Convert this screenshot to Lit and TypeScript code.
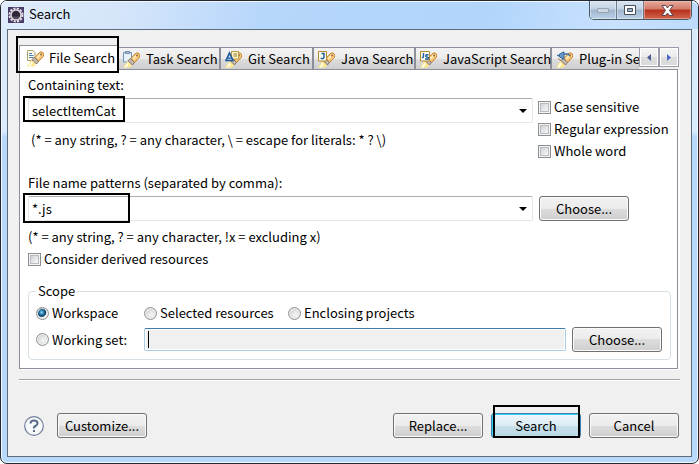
import { LitElement, html, css, svg } from 'lit';
import { customElement, property, state } from 'lit/decorators.js';
import { classMap } from 'lit/directives/class-map.js';

const base = css`
  * { box-sizing: border-box; }
  button, input {
    font: inherit;
    color: inherit;
    margin: 0;
  }
`;

const overlays: Record<string, unknown> = {
  file: svg`<path d="M.5.5h5.500l2 2v8H.500z" fill="#fffdf0" stroke="#a9a06c"/><path d="M2 3.500h3M2 5.500h4.500M2 7.500h4.500" stroke="#4f7fb8"/>`,
  task: svg`<path d="M.5 1.500h8v9.500H.500z" fill="#e9f1fb" stroke="#6f93bd"/><path d="M2.500.5h4v2h-4z" fill="#b5c6dc" stroke="#7189a8"/>`,
  git: svg`<path d="M6.500.5h7v7.500h-7z" fill="#fff5c4" stroke="#b79a45"/><path d="M8.500 3h3.500M8.500 5h3.500" stroke="#8b793b"/><path d="M4.500 2L8 9.500H1z" fill="#d6e8f7" stroke="#1f5c99" stroke-width="1.700"/><path d="M2.500 7.200h4" stroke="#1f5c99" stroke-width="1.300"/>`,
  java: svg`<path d="M.5.5h8v9.500H.500z" fill="#fffef5" stroke="#b58a2f"/><path d="M3.500 2.500h2.500v3.500q0 1.700-1.500 1.700T3 6.800" fill="none" stroke="#1f5c99" stroke-width="1.500"/>`,
  js: svg`<path d="M.5.5h9v9.500H.500z" fill="#fffef5" stroke="#b58a2f"/><path d="M3.500 2v3.500q0 1.200-1.700 1M8.500 4q-2.500-.8-2.700.6t1.600 1.500T8 8.300L5 8" fill="none" stroke="#1f5c99" stroke-width="1.400"/>`,
  plugin: svg`<path d="M1 4.500h3M8 3h4l1.500 1.500" fill="none" stroke="#44709f" stroke-width="1.500"/><path d="M3.500 3L8 .8v7.400L3.500 6z" fill="#6c99c9" stroke="#3b6798"/><path d="M2 7.500l3 2" stroke="#a9794a"/>`,
};

@customElement('search-icon')
class SearchIcon extends LitElement {
  static styles = css`:host { display: block; flex: none; width: 17px; height: 17px; } svg { display: block; }`;
  @property() kind = 'file';
  private torch() {
    return svg`<path d="M4.500 10L9 14 7 16.500H0z" fill="#ffe68a" />
      <path d="M4.500 11.500L6 13l-2.500 3.500H1.500z" fill="#fffde8" />
      <path d="M8 7.500L12 3q2-2 3.800-.5t.4 4L11.500 11.500z" fill="#fbcb7c" stroke="#c47f2b" />
      <path d="M10 8L14 3.800" stroke="#ffedc6" stroke-width="1.600" />
      <circle cx="14" cy="4.500" r="1" fill="#8d6a4a" />
      <path d="M5 9.500L7.500 7.500l4 3.800L9.500 14z" fill="#c3b9ad" stroke="#8a7868" />`;
  }
  render() {
    const front = this.kind === 'file' || this.kind === 'task';
    return html`<svg width="17" height="17" viewBox="0 0 17 17" aria-hidden="true">
      ${front ? overlays[this.kind] : ''}${this.torch()}${front ? '' : overlays[this.kind]}
    </svg>`;
  }
}

@customElement('push-button')
class PushButton extends LitElement {
  static styles = [base, css`
    :host { display: block; flex: none; width: 90px; }
    button {
      display: block;
      width: 100%;
      height: 25px;
      padding: 0;
      line-height: 20px;
      border: 1px solid #707070;
      border-radius: 3px;
      background: linear-gradient(#f2f2f2, #ebebeb 50%, #dddddd 50%, #cfcfcf);
      box-shadow: inset 0 0 0 1px #fafafa;
    }
    .primary {
      border-color: #3c7fb1;
      background: linear-gradient(#eef6fa, #dcecf3 50%, #c8e0ea 50%, #b8d9e6);
      box-shadow: inset 0 0 0 1px #39d0f5;
    }
  `];
  @property() label = '';
  @property({ type: Boolean }) primary = false;
  render() {
    return html`<button type="button" class=${classMap({ primary: this.primary })}>${this.label}</button>`;
  }
}

@customElement('combo-box')
class ComboBox extends LitElement {
  static styles = [base, css`
    :host { display: block; }
    .field { display: grid; grid-template-rows: 20px 25px; row-gap: 3px; }
    label { line-height: 20px; }
    .box {
      position: relative;
      display: flex;
      border: 1px solid #e2e6ee;
      border-top-color: #abadb3;
      border-radius: 2px;
      background: #fff;
    }
    input { flex: 1; min-width: 0; border: 0; padding: 0 3px; outline: 0; background: none; }
    button { width: 18px; padding: 0; border: 0; background: none; display: grid; place-items: center; }
    .mark {
      position: absolute;
      left: -6px;
      top: -3px;
      width: 102px;
      height: 26px;
      border: 2px solid #000;
      pointer-events: none;
    }
    .mark.tall { top: -4px; width: 107px; height: 30px; }
  `];
  @property() label = '';
  @property() value = '';
  @property({ type: Boolean }) tall = false;
  render() {
    return html`<div class="field">
      <label for="text">${this.label}</label>
      <div class="box">
        <input id="text" type="text" .value=${this.value} />
        <button type="button" aria-label="Show history">
          <svg width="8" height="4" viewBox="0 0 8 4"><path d="M0 0h8L4 4z" /></svg>
        </button>
        <div class=${classMap({ mark: true, tall: this.tall })}></div>
      </div>
    </div>`;
  }
}

@customElement('choice-item')
class ChoiceItem extends LitElement {
  static styles = [base, css`
    :host { display: block; line-height: 20px; white-space: nowrap; }
    label { display: flex; align-items: center; gap: 3px; }
    input {
      appearance: none;
      flex: none;
      width: 13px;
      height: 13px;
      border: 1px solid #8e8f8f;
      background: linear-gradient(135deg, #c4c8ce, #f4f5f6 75%);
      box-shadow: inset 0 0 0 1px #f4f4f4, inset 0 0 0 2px #b8bcc2;
    }
    input[type='radio'] {
      border-radius: 50%;
      background: radial-gradient(circle at 60% 60%, #f6f6f6, #c3c6ca);
      box-shadow: inset 0 0 0 1px #f0f0f0;
    }
    input[type='radio']:checked {
      background: radial-gradient(circle at 42% 40%, #8fdcf5 0, #2d86b5 2px, #0d3a5e 4px, #e4e8ec 5px);
    }
  `];
  @property() type = 'checkbox';
  @property() label = '';
  @property({ type: Boolean }) checked = false;
  private pick() {
    this.dispatchEvent(new CustomEvent('pick'));
  }
  render() {
    return html`<label>
      <input type=${this.type} .checked=${this.checked} @change=${this.pick} />
      <span>${this.label}</span>
    </label>`;
  }
}

@customElement('app-root')
class AppRoot extends LitElement {
  static styles = [base, css`
    :host {
      display: block;
      font: 13px/20px 'Noto Sans CJK SC', 'Noto Sans', sans-serif;
      color: #000;
    }
    .window {
      border: 1px solid #23282e;
      border-radius: 7px;
      padding: 0 6px 6px;
      background: linear-gradient(#d9e9fb, #d9ebfd 130px, #b9d9fc 136px, #b9d9fc);
      box-shadow: inset 0 0 0 1px #eef7ff;
    }
    .titlebar {
      display: flex;
      align-items: flex-start;
      height: 28px;
      margin: 0 -6px;
      padding-left: 7px;
      border-radius: 6px 6px 0 0;
      background: linear-gradient(100deg, #dfecfb, #d4e5fa 18%, #b6d6fb 38%, #b2d5fc 70%, #c8e2fd 88%, #bcdafb);
      box-shadow: inset 0 1px 0 #f1f8ff;
    }
    .logo { margin-top: 6px; flex: none; }
    h1 { flex: 1; margin: 3px 0 0 5px; font: inherit; }
    .caption {
      display: flex;
      margin-right: 6px;
      border: 1px solid #4b5866;
      border-top: 0;
      border-radius: 0 0 5px 5px;
      overflow: hidden;
    }
    .caption button {
      display: grid;
      place-items: center;
      width: 27px;
      height: 18px;
      padding: 0;
      border: 0;
      border-right: 1px solid #6d7a89;
      background: linear-gradient(#d7e3f0, #c3d3e4 45%, #9fb5cb 50%, #bdd2e8);
      box-shadow: inset 0 0 0 1px #e6f0fa88;
    }
    .caption .close {
      width: 47px;
      border-right: 0;
      background: linear-gradient(#e6aa9d, #d27a69 45%, #b72f1b 50%, #d0654a);
      box-shadow: inset 0 0 0 1px #f3c3b888;
    }
    .client {
      padding: 15px 11px 18px;
      border: 1px solid #5b6c7c;
      background: #f0f0f0;
    }
    .strip { position: relative; display: flex; align-items: flex-end; height: 25px; margin-bottom: -1px; }
    .tab {
      position: relative;
      display: flex;
      align-items: center;
      gap: 6px;
      flex: none;
      height: 22px;
      margin-bottom: 1px;
      padding: 1px 0 0 4px;
      border: 1px solid #8c8e99;
      border-width: 1px 2px 0 0;
      background: linear-gradient(#f3f3f3, #ebebeb 50%, #dddddd 50%, #cfcfcf);
      white-space: nowrap;
      text-align: left;
    }
    .active {
      height: 25px;
      margin: 0;
      width: 100px;
      gap: 5px;
      padding: 0 0 0 7px;
      border-width: 1px 1px 0 1px;
      background: #fff;
    }
    .task { width: 102px; }
    .git { width: 93px; }
    .java { width: 102px; }
    .js { width: 136px; }
    .plugin { flex: 1; min-width: 0; overflow: hidden; border-right-width: 0; }
    .scroll {
      width: 20px;
      height: 20px;
      margin-bottom: 3px;
      padding: 0;
      border: 1px solid #9a9caa;
      background: linear-gradient(#f5f5f5, #ececec 50%, #dddddd 50%, #dadada);
      box-shadow: inset 0 0 0 1px #fff;
      display: grid;
      place-items: center;
    }
    .scroll:last-child { margin-right: 1px; }
    .mark { position: absolute; border: 2px solid #000; pointer-events: none; }
    .mark.on-tab { left: -4px; top: -10px; width: 103px; height: 37px; }
    .mark.on-button { left: 2px; top: -8px; width: 87px; height: 33px; }
    .panel {
      margin-right: 2px;
      padding: 5px 6px 8px 8px;
      border: 1px solid #8c8e99;
      background: #fff;
      box-shadow: 2px 1px 0 #fff;
    }
    .pair { display: grid; grid-template-columns: minmax(0, 1fr) 133px; column-gap: 5px; white-space: nowrap; }
    .options { display: grid; grid-auto-rows: 22px; align-items: center; padding-top: 21px; }
    .hint { margin: 7px 0 0 3px; }
    .patterns { margin-top: 11px; align-items: end; }
    .patterns push-button { margin-left: 1px; }
    .rule { margin: 6px 0 2px; }
    fieldset {
      min-width: 0;
      margin: 12px 0 0;
      padding: 2px 8px 7px 7px;
      border: 1px solid #d5dfe5;
      border-radius: 4px;
    }
    legend { padding: 0 2px; line-height: 20px; }
    .scopes { display: grid; grid-template-columns: 108px 144px 1fr; }
    .working { display: grid; grid-template-columns: 108px 1fr 90px; align-items: center; margin-top: 4px; }
    .working input {
      min-width: 0;
      height: 23px;
      margin-right: 6px;
      padding: 0 3px;
      border: 1px solid #a9cbe4;
      border-top-color: #3d7bad;
      border-radius: 2px;
      background: #f0f0f0;
      outline: 0;
      box-shadow: inset 0 0 0 1px #fff;
    }
    .set { position: relative; display: grid; }
    .caret { position: absolute; left: 4px; top: 3px; width: 1px; height: 17px; background: #000; }
    .divider { height: 2px; margin: 10px 0 0; border: 0; border-top: 1px solid #a0a0a0; border-bottom: 1px solid #fff; }
    footer { display: flex; align-items: center; gap: 8px; padding: 32px 1px 0 5px; }
    .help { width: 20px; height: 20px; margin-right: 5px; padding: 0; border: 0; background: none; }
    .help svg { display: block; }
    .space { flex: 1; }
    .default { position: relative; }
  `];

  @state() private scope = 'Workspace';

  private tabs = [
    ['task', 'Task Search'],
    ['git', 'Git Search'],
    ['java', 'Java Search'],
    ['js', 'JavaScript Search'],
    ['plugin', 'Plug-in Search'],
  ];

  private radio(label: string) {
    return html`<choice-item type="radio" label=${label} .checked=${this.scope === label}
      @pick=${() => (this.scope = label)}></choice-item>`;
  }

  render() {
    return html`<div class="window">
      <header class="titlebar">
        <svg class="logo" width="16" height="16" viewBox="0 0 16 16" aria-hidden="true">
          <path d="M0 0h16v16H0z" fill="#4b3b68" />
          <circle cx="8" cy="8" r="6.500" fill="none" stroke="#e6e4ea" stroke-width="2" stroke-dasharray="2.100 1.300" />
          <circle cx="8" cy="8" r="5" fill="#2d2738" stroke="#d9d7dd" stroke-width="1.600" />
          <path d="M4.500 9.500h7q-1 2.500-3.500 2.500t-3.500-2.500" fill="#55505f" />
        </svg>
        <h1>Search</h1>
        <div class="caption">
          <button type="button" aria-label="Minimize">
            <svg width="12" height="5" viewBox="0 0 12 5"><path d="M.5.5h11v4H.5z" fill="#ccd7e1" stroke="#94a4b3" /></svg>
          </button>
          <button type="button" aria-label="Maximize">
            <svg width="12" height="10" viewBox="0 0 12 10"><path d="M.5.5h11v9H.5z" fill="#fff" stroke="#48515f" /><path d="M3.500 3.500h5v3h-5z" fill="#9eb2c8" stroke="#48515f" /></svg>
          </button>
          <button type="button" class="close" aria-label="Close">
            <svg width="13" height="11" viewBox="0 0 13 11"><path d="M1 .5h3.500l2 2.500 2-2.500H12L8.500 5.500l3.500 5H8.500l-2-2.500-2 2.500H1l3.500-5z" fill="#fff" stroke="#5a4450" /></svg>
          </button>
        </div>
      </header>
      <main class="client">
        <div class="strip" role="tablist">
          <button type="button" role="tab" aria-selected="true" class="tab active">
            <search-icon kind="file"></search-icon>File Search
            <span class="mark on-tab"></span>
          </button>
          ${this.tabs.map(([kind, label]) => html`<button type="button" role="tab" class="tab ${kind}">
            <search-icon kind=${kind}></search-icon><span>${label}</span>
          </button>`)}
          <button type="button" class="scroll" aria-label="Scroll left">
            <svg width="4" height="7" viewBox="0 0 4 7"><path d="M4 0v7L0 3.500z" fill="#4a5a96" /></svg>
          </button>
          <button type="button" class="scroll" aria-label="Scroll right">
            <svg width="4" height="7" viewBox="0 0 4 7"><path d="M0 0v7l4-3.500z" fill="#4d67c4" /></svg>
          </button>
        </div>
        <section class="panel">
          <div class="pair">
            <div>
              <combo-box label="Containing text:" value="selectItemCat"></combo-box>
              <div class="hint">(* = any string, ? = any character, \\ = escape for literals: * ? \\)</div>
            </div>
            <div class="options">
              <choice-item label="Case sensitive"></choice-item>
              <choice-item label="Regular expression"></choice-item>
              <choice-item label="Whole word"></choice-item>
            </div>
          </div>
          <div class="pair patterns">
            <combo-box tall label="File name patterns (separated by comma):" value="*.js"></combo-box>
            <push-button label="Choose..."></push-button>
          </div>
          <div class="rule">(* = any string, ? = any character, !x = excluding x)</div>
          <choice-item label="Consider derived resources"></choice-item>
          <fieldset>
            <legend>Scope</legend>
            <div class="scopes">
              ${this.radio('Workspace')}${this.radio('Selected resources')}${this.radio('Enclosing projects')}
            </div>
            <div class="working">
              ${this.radio('Working set:')}
              <div class="set"><input type="text" aria-label="Working set" readonly /><span class="caret"></span></div>
              <push-button label="Choose..."></push-button>
            </div>
          </fieldset>
        </section>
        <hr class="divider" />
        <footer>
          <button type="button" class="help" aria-label="Help">
            <svg width="20" height="20" viewBox="0 0 20 20">
              <circle cx="10" cy="10" r="9.300" fill="#f7f8fa" stroke="#6f7f9c" stroke-width="1.200" />
              <path d="M6.500 7.500Q6.500 4.500 10 4.500t3.500 2.700Q13.500 9 11.500 10T10 12.500" fill="none" stroke="#5a6b8c" stroke-width="2" />
              <path d="M9 14h2v2H9z" fill="#5a6b8c" />
            </svg>
          </button>
          <push-button label="Customize..."></push-button>
          <div class="space"></div>
          <push-button label="Replace..."></push-button>
          <div class="default"><push-button primary label="Search"></push-button><div class="mark on-button"></div></div>
          <push-button label="Cancel"></push-button>
        </footer>
      </main>
    </div>`;
  }
}
